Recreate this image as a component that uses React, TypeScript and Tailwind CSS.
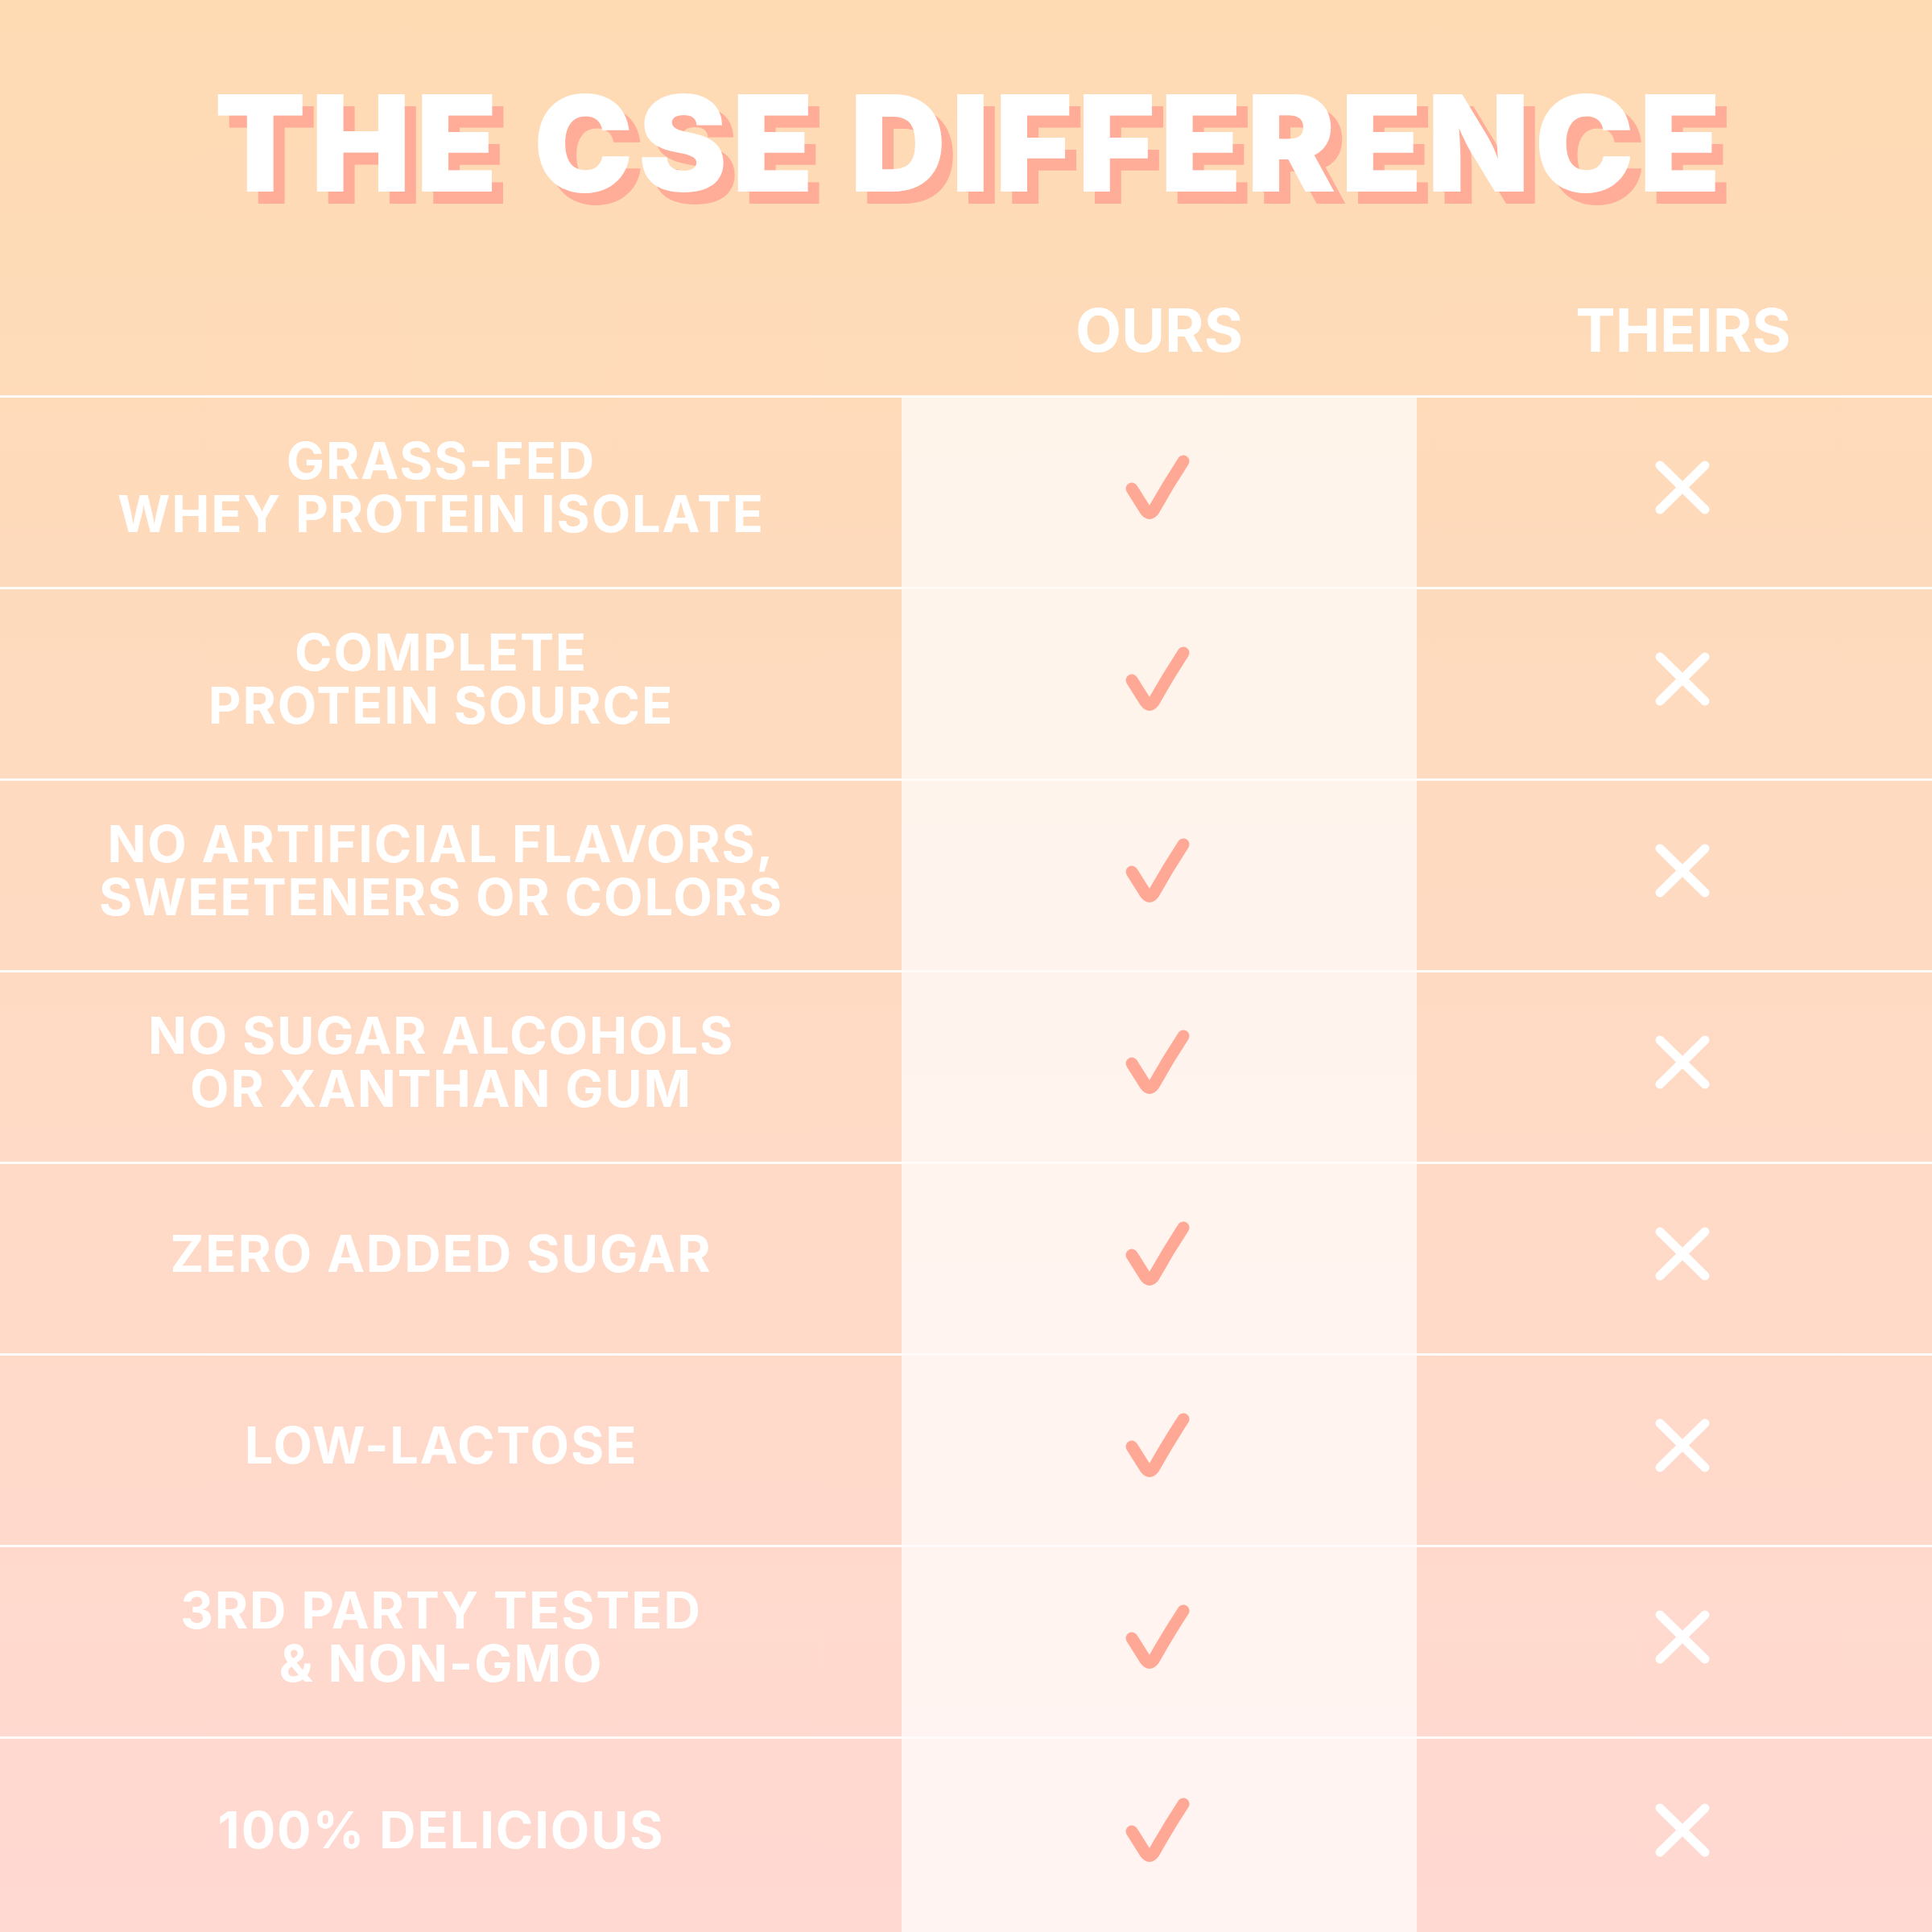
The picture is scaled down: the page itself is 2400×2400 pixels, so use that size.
import React from 'react';

const rows: string[][] = [
  ['GRASS-FED', 'WHEY PROTEIN ISOLATE'],
  ['COMPLETE', 'PROTEIN SOURCE'],
  ['NO ARTIFICIAL FLAVORS,', 'SWEETENERS OR COLORS'],
  ['NO SUGAR ALCOHOLS', 'OR XANTHAN GUM'],
  ['ZERO ADDED SUGAR'],
  ['LOW-LACTOSE'],
  ['3RD PARTY TESTED', '& NON-GMO'],
  ['100% DELICIOUS'],
];

const Check = () => (
  <svg width="120" height="120" viewBox="0 0 120 120" fill="none">
    <path
      d="M26 57 L43 84 Q48 91 53 84 Q71 52 90 23"
      stroke="#ffa896"
      strokeWidth="15"
      strokeLinecap="round"
      strokeLinejoin="round"
    />
  </svg>
);

const Cross = () => (
  <svg width="120" height="120" viewBox="0 0 120 120" fill="none">
    <path d="M32 28 L88 83 M88 28 L32 83" stroke="#ffffff" strokeWidth="11" strokeLinecap="round" />
  </svg>
);

export default function App() {
  return (
    <div
      className="w-[2400px] h-[2400px] flex flex-col bg-gradient-to-b from-[#fedbb3] to-[#ffd9d2] text-white"
      style={{ fontFamily: 'Inter, "Liberation Sans", sans-serif' }}
    >
      {/* Header */}
      <div className="h-[491px] flex flex-col">
        <div className="pt-[83px] pl-[10px] flex justify-center">
          <h1 className="text-[166px] leading-[190px] font-black tracking-[0.035em] [text-shadow:14px_15px_0_#ffac98]">
            THE CSE DIFFERENCE
          </h1>
        </div>
        <div className="mt-auto mb-[44px] grid grid-cols-[1120px_640px_640px] text-[74px] font-bold leading-none">
          <div />
          <div className="text-center">OURS</div>
          <div className="text-center pl-[22px]">THEIRS</div>
        </div>
      </div>

      {/* Rows */}
      {rows.map((lines, i) => (
        <div
          key={i}
          className={`${i === rows.length - 1 ? 'flex-1' : 'h-[238px]'} grid grid-cols-[1120px_640px_640px] border-t-[3px] border-white/90`}
        >
          <div className="flex flex-col items-center justify-center pr-[24px] pb-[14px] text-[63px] font-bold leading-[66px] tracking-[0.03em] text-center">
            {lines.map((l) => (
              <div key={l}>{l}</div>
            ))}
          </div>
          <div className="bg-white/70 flex items-center justify-center pb-[4px]">
            <Check />
          </div>
          <div className="flex items-center justify-center pl-[20px] pb-[4px]">
            <Cross />
          </div>
        </div>
      ))}
    </div>
  );
}
